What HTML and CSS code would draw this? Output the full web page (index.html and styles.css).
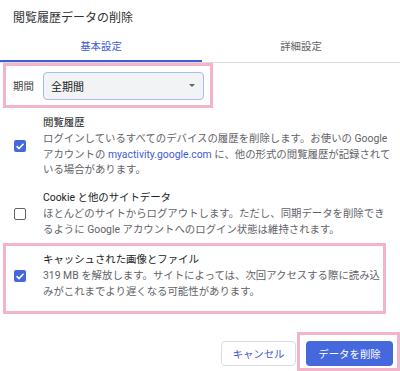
FILE: index.html
```html
<!DOCTYPE html>
<html lang="ja">
<head>
<meta charset="utf-8">
<title>閲覧履歴データの削除</title>
<link rel="stylesheet" href="styles.css">
</head>
<body>
<div class="dialog">
  <div class="dialog-title">閲覧履歴データの削除</div>
  <div class="tabs">
    <div class="tab active">基本設定</div>
    <div class="tab rest">詳細設定</div>
  </div>

  <div class="period-box">
    <span class="period-label">期間</span>
    <div class="select"><span>全期間</span><span class="arrow"></span></div>
  </div>

  <div class="items">
    <div class="item">
      <span class="checkbox checked"><svg viewBox="0 0 12 12" width="12" height="12"><path d="M2.6 6.1 L5 8.5 L9.5 3.7" fill="none" stroke="#fff" stroke-width="1.6"/></svg></span>
      <div class="item-text">
        <div class="item-title">閲覧履歴</div>
        <div class="item-desc">ログインしているすべてのデバイスの履歴を削除します。お使いの Google<br>アカウントの <span class="link">myactivity.google.com</span> に、他の形式の閲覧履歴が記録されて<br>いる場合があります。</div>
      </div>
    </div>
    <div class="item">
      <span class="checkbox"></span>
      <div class="item-text">
        <div class="item-title">Cookie と他のサイトデータ</div>
        <div class="item-desc">ほとんどのサイトからログアウトします。ただし、同期データを削除でき<br>るように Google アカウントへのログイン状態は維持されます。</div>
      </div>
    </div>
  </div>

  <div class="highlight-item">
    <div class="item">
      <span class="checkbox checked"><svg viewBox="0 0 12 12" width="12" height="12"><path d="M2.6 6.1 L5 8.5 L9.5 3.7" fill="none" stroke="#fff" stroke-width="1.6"/></svg></span>
      <div class="item-text">
        <div class="item-title">キャッシュされた画像とファイル</div>
        <div class="item-desc">319 MB を解放します。サイトによっては、次回アクセスする際に読み込<br>みがこれまでより遅くなる可能性があります。</div>
      </div>
    </div>
  </div>

  <div class="footer">
    <div class="btn cancel">キャンセル</div>
    <div class="btn-box"><div class="btn primary">データを削除</div></div>
  </div>
</div>
</body>
</html>
```
FILE: styles.css
```css
* { box-sizing: border-box; }
html, body { margin: 0; padding: 0; background: #fff; }
body {
  width: 400px;
  height: 371px;
  overflow: hidden;
  font-family: Roboto, "Noto Sans CJK JP", sans-serif;
  color: #202124;
}
.dialog-title {
  padding: 10px 13px 0;
  font-size: 12px;
  line-height: 16px;
  color: #303134;
}
.tabs {
  display: flex;
  height: 37px;
  border-bottom: 1px solid #dadce0;
}
.tab {
  display: flex;
  align-items: center;
  justify-content: center;
  padding-top: 2px;
  font-size: 10.4px;
  color: #5f6368;
}
.tab.active {
  width: 202px;
  color: #3f5bd6;
  box-shadow: inset 0 -2px 0 #3f5bd6;
}
.tab.rest { flex: 1; }

.period-box {
  margin-left: 3px;
  width: 210px;
  height: 45px;
  border: 3px solid #f3b4cb;
  padding: 0 6px 0 7px;
  display: flex;
  align-items: center;
  gap: 10px;
}
.period-label {
  flex: none;
  width: 20px;
  white-space: nowrap;
  font-size: 10.4px;
  color: #3c4043;
}
.select {
  flex: none;
  width: 161px;
  height: 28px;
  border: 1px solid #a9bcef;
  border-radius: 4px;
  background: #f1f3f4;
  display: flex;
  align-items: center;
  justify-content: space-between;
  padding: 0 8px 0 7px;
  font-size: 11px;
  color: #202124;
}
.arrow {
  width: 0;
  height: 0;
  border-left: 3px solid transparent;
  border-right: 3px solid transparent;
  border-top: 3px solid #5f6368;
}

.items { margin-top: 7px; }
.item {
  display: flex;
  align-items: center;
  gap: 17px;
  padding-left: 14px;
}
.item + .item { margin-top: 12.5px; }
.checkbox {
  flex: none;
  width: 12px;
  height: 12px;
  border: 1.6px solid #5f6368;
  border-radius: 2px;
  display: block;
}
.checkbox.checked {
  border: none;
  background: #4568dc;
}
.checkbox svg { display: block; }
.item-text {
  font-size: 10.4px;
  white-space: nowrap;
}
.item-title { line-height: 16px; color: #202124; }
.item-desc { line-height: 15.5px; color: #5f6368; }
.link { color: #3f5bd6; }

.highlight-item {
  margin: 6px 0 0 3px;
  width: 383px;
  border: 3px solid #f3b4cb;
  padding: 6px 0 12px 0;
}
.highlight-item .item { padding-left: 8px; }

.footer {
  margin-top: 18px;
  display: flex;
  justify-content: flex-end;
  align-items: flex-start;
}
.btn {
  height: 25px;
  border-radius: 4px;
  display: flex;
  align-items: center;
  justify-content: center;
  font-size: 10.4px;
}
.cancel {
  width: 75px;
  margin-top: 9px;
  margin-right: 1px;
  border: 1px solid #dadce0;
  color: #3f5bd6;
  background: #fff;
}
.btn-box {
  width: 103px;
  height: 39px;
  border: 3px solid #f3b4cb;
  padding: 6px 4px 2px 6px;
}
.primary {
  width: 87px;
  background: #4568dc;
  color: #fff;
}
```
